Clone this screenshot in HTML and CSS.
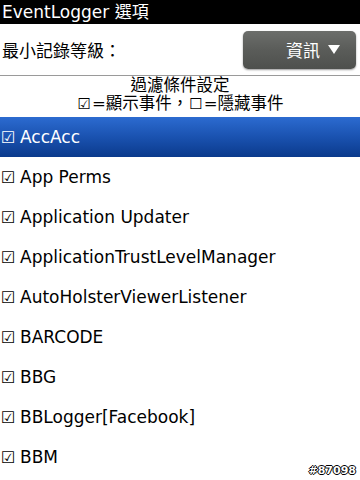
FILE: index.html
```html
<!DOCTYPE html>
<html>
<head>
    <title>EventLogger 選項</title>
    <link rel="stylesheet" href="styles.css">
</head>
<body>
    <div class="titlebar">EventLogger 選項</div>

    <div class="level-row">
        <span class="level-label">最小記錄等級：</span>
        <div class="dropdown">
            <span>資訊</span>
            <span class="arrow"></span>
        </div>
    </div>

    <div class="filter-head">
        <div>過濾條件設定</div>
        <div><span class="box">☑</span>=顯示事件，<span class="box">☐</span>=隱藏事件</div>
    </div>

    <ul class="list">
        <li class="selected"><span class="check">☑</span>AccAcc</li>
        <li><span class="check">☑</span>App Perms</li>
        <li><span class="check">☑</span>Application Updater</li>
        <li><span class="check">☑</span>ApplicationTrustLevelManager</li>
        <li><span class="check">☑</span>AutoHolsterViewerListener</li>
        <li><span class="check">☑</span>BARCODE</li>
        <li><span class="check">☑</span>BBG</li>
        <li><span class="check">☑</span>BBLogger[Facebook]</li>
        <li><span class="check">☑</span>BBM</li>
    </ul>

    <div class="stamp">#87098</div>
</body>
</html>
```

FILE: styles.css
```css
body {
    margin: 0;
    width: 360px;
    height: 480px;
    overflow: hidden;
    position: relative;
    background-color: #fff;
    font-family: "DejaVu Sans", "Noto Sans CJK TC", sans-serif;
    color: #000;
}
.titlebar {
    height: 24px;
    line-height: 24px;
    background-color: #000;
    color: #fff;
    font-size: 17px;
    padding-left: 2px;
}
.level-row {
    display: flex;
    align-items: center;
    justify-content: space-between;
    height: 51px;
    padding: 0 4px 0 2px;
    border-bottom: 1px solid #9a9a9a;
    font-size: 17px;
}
.dropdown {
    width: 113px;
    height: 38px;
    box-sizing: border-box;
    display: flex;
    align-items: center;
    justify-content: flex-end;
    gap: 8px;
    padding-right: 16px;
    border-radius: 5px;
    background: linear-gradient(#6c6e6b, #5a5c59 50%, #4e504d);
    box-shadow: 0 1px 2px rgba(0, 0, 0, 0.4);
    color: #fff;
    font-size: 17px;
}
.arrow {
    width: 0;
    height: 0;
    border-left: 6px solid transparent;
    border-right: 6px solid transparent;
    border-top: 9px solid #fff;
}
.filter-head {
    text-align: center;
    font-size: 16.5px;
    line-height: 18px;
    padding: 1px 0 4px;
}
.filter-head .box {
    font-size: 15px;
    padding: 0 1px;
}
.filter-head .comma {
    padding: 0 4px;
}
.list {
    list-style: none;
    margin: 0;
    padding: 0;
}
.list li {
    display: flex;
    align-items: center;
    height: 40px;
    padding-left: 1px;
    font-size: 17px;
    white-space: nowrap;
}
.list .check {
    width: 19px;
    font-size: 16px;
}
.list li.selected {
    background: linear-gradient(#2c6bd0, #1a52b0 50%, #0b3a8c);
    color: #fff;
}
.stamp {
    position: absolute;
    right: 4px;
    bottom: 3px;
    font-size: 11px;
    font-weight: bold;
    color: #fff;
    text-shadow: -1px 0 #000, 1px 0 #000, 0 -1px #000, 0 1px #000;
}
```
